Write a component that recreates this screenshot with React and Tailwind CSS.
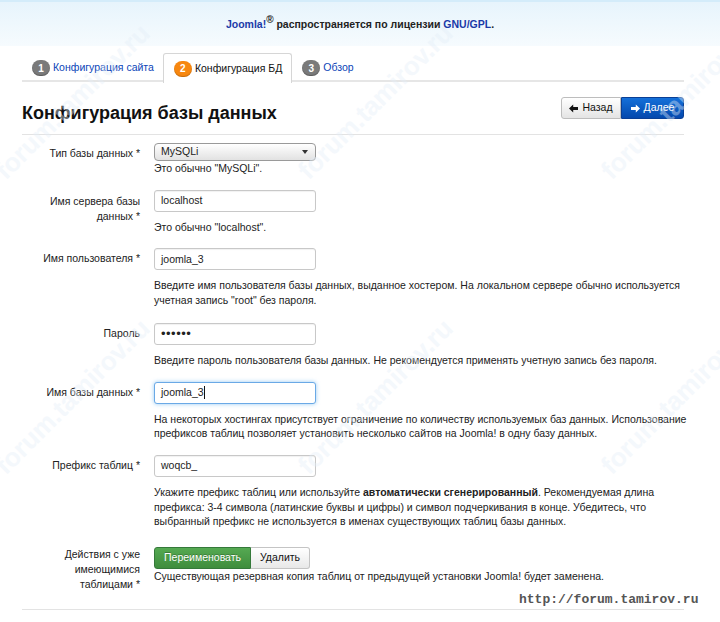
import React from "react";

function ArrowLeft() {
  return (
    <svg width="9" height="9" viewBox="0 0 9 9" className="inline-block">
      <path d="M0 4.5 L4.2 0.5 L4.2 3 L9 3 L9 6 L4.2 6 L4.2 8.5 Z" fill="#111" />
    </svg>
  );
}
function ArrowRight() {
  return (
    <svg width="9" height="9" viewBox="0 0 9 9" className="inline-block">
      <path d="M9 4.5 L4.8 0.5 L4.8 3 L0 3 L0 6 L4.8 6 L4.8 8.5 Z" fill="#fff" />
    </svg>
  );
}

function Row({ label, labelCls, className, children }) {
  return (
    <div className={`flex ${className}`}>
      <div className={`w-[118px] shrink-0 text-right leading-[15px] text-[#222] ${labelCls}`}>{label}</div>
      <div className="ml-[14px] w-[530px]">{children}</div>
    </div>
  );
}

const inputCls =
  "h-[22px] w-[162px] border border-[#c8c8c8] rounded-[3px] bg-white px-[6px] flex items-center text-[10.5px] text-[#222] shadow-[inset_0_1px_1px_rgba(0,0,0,0.06)]";
const helpCls = "text-[10.5px] leading-[14.7px] text-[#222] whitespace-nowrap";

function Watermark({ cls }) {
  return (
    <span
      className={`absolute pointer-events-none origin-bottom-left -rotate-45 whitespace-nowrap text-[26px] leading-[30px] font-bold text-[#e4eef8] opacity-40 font-['Liberation_Sans',sans-serif] ${cls}`}
    >
      forum.tamirov.ru
    </span>
  );
}

export default function App() {
  return (
    <div className="relative w-[720px] h-[622px] overflow-hidden bg-white font-['Liberation_Sans',Arial,sans-serif] text-[10.5px] text-[#222]">
      {/* header band */}
      <div className="h-[46px] border-t-2 border-[#d4ecfa] bg-gradient-to-b from-[#e7f4fc] to-[#f6fbfe] flex items-center justify-center pt-[2px]">
        <span className="font-bold text-[10.5px] text-[#222]">
          <span className="text-[#1a3aa8]">Joomla!</span>
          <sup className="text-[10px] font-bold">®</sup> распространяется по лицензии{" "}
          <span className="text-[#1a3aa8]">GNU/GPL</span>.
        </span>
      </div>

      <div className="px-[22px] w-[706px]">
        {/* tabs */}
        <div className="mt-[8px] h-[28px] flex border-b-2 border-[#e6e6e6]">
          <div className="h-[28px] pl-[10px] pr-[9px] flex items-center gap-[3px]">
            <span className="w-[18px] h-[16px] rounded-full bg-[#7a7a7a] text-white text-[10px] font-bold flex items-center justify-center shadow-[inset_0_-1px_1px_rgba(0,0,0,0.25)]">1</span>
            <span className="text-[#0b45b8]">Конфигурация сайта</span>
          </div>
          <div className="h-[30px] pl-[10px] pr-[9px] flex items-center gap-[3px] border border-[#d6d6d6] border-b-0 rounded-t-[3px] bg-white -mt-[1px]">
            <span className="w-[18px] h-[16px] rounded-full bg-[#f7870f] text-white text-[10px] font-bold flex items-center justify-center shadow-[inset_0_-1px_1px_rgba(0,0,0,0.2)]">2</span>
            <span className="text-[#111]">Конфигурация БД</span>
          </div>
          <div className="h-[28px] pl-[10px] pr-[9px] flex items-center gap-[3px]">
            <span className="w-[18px] h-[16px] rounded-full bg-[#7a7a7a] text-white text-[10px] font-bold flex items-center justify-center shadow-[inset_0_-1px_1px_rgba(0,0,0,0.25)]">3</span>
            <span className="text-[#0b45b8]">Обзор</span>
          </div>
        </div>

        {/* title row */}
        <div className="pt-[15px] flex justify-between items-start">
          <h1 className="mt-[4px] text-[18px] leading-[24px] font-bold text-[#111]">Конфигурация базы данных</h1>
          <div className="flex h-[22px]">
            <div className="w-[60px] h-[22px] flex items-center justify-center gap-[4px] border border-[#bdbdbd] rounded-l-[3px] bg-gradient-to-b from-white to-[#e4e4e4] text-[#111]">
              <ArrowLeft />
              <span>Назад</span>
            </div>
            <div className="w-[63px] h-[22px] flex items-center justify-center gap-[4px] border border-[#0a3f95] rounded-r-[3px] bg-gradient-to-b from-[#1570d9] to-[#0548ad] text-white">
              <ArrowRight />
              <span>Далее</span>
            </div>
          </div>
        </div>
        <div className="mt-[9px] h-px w-[662px] bg-[#e3e3e3]" />

        {/* form */}
        <Row className="mt-[8px]" labelCls="mt-[3px]" label="Тип базы данных *">
          <div className="h-[18px] w-[162px] border border-[#9a9a9a] rounded-[4px] bg-gradient-to-b from-white to-[#e2e2e2] flex items-center justify-between pl-[6px] pr-[7px]">
            <span>MySQLi</span>
            <svg width="6" height="4" viewBox="0 0 6 4"><path d="M0 0 L6 0 L3 4 Z" fill="#333" /></svg>
          </div>
          <div className={helpCls}>Это обычно "MySQLi".</div>
        </Row>

        <Row
          className="mt-[14px]"
          labelCls="mt-[4px]"
          label={<>Имя сервера базы<br />данных *</>}
        >
          <div className={inputCls}>localhost</div>
          <div className={`${helpCls} mt-[8px]`}>Это обычно "localhost".</div>
        </Row>

        <Row className="mt-[14px]" labelCls="mt-[3px]" label="Имя пользователя *">
          <div className={inputCls}>joomla_3</div>
          <div className={`${helpCls} mt-[8px]`}>
            Введите имя пользователя базы данных, выданное хостером. На локальном сервере обычно используется
            <br />
            учетная запись "root" без пароля.
          </div>
        </Row>

        <Row className="mt-[15px]" labelCls="mt-[3px]" label="Пароль">
          <div className={`${inputCls} text-[13px] tracking-[0.5px]`}>••••••</div>
          <div className={`${helpCls} mt-[8px]`}>
            Введите пароль пользователя базы данных. Не рекомендуется применять учетную запись без пароля.
          </div>
        </Row>

        <Row className="mt-[14px]" labelCls="mt-[3px]" label="Имя базы данных *">
          <div className="h-[22px] w-[162px] border border-[#6aa9e6] rounded-[3px] bg-white px-[6px] flex items-center text-[10.5px] text-[#222] shadow-[0_0_4px_rgba(82,168,236,0.6)]">
            joomla_3<span className="inline-block w-px h-[13px] bg-[#111]" />
          </div>
          <div className={`${helpCls} mt-[8px]`}>
            На некоторых хостингах присутствует ограничение по количеству используемых баз данных. Использование
            <br />
            префиксов таблиц позволяет установить несколько сайтов на Joomla! в одну базу данных.
          </div>
        </Row>

        <Row className="mt-[14px]" labelCls="mt-[3px]" label="Префикс таблиц *">
          <div className={inputCls}>woqcb_</div>
          <div className={`${helpCls} mt-[8px]`}>
            Укажите префикс таблиц или используйте <b>автоматически сгенерированный</b>. Рекомендуемая длина
            <br />
            префикса: 3-4 символа (латинские буквы и цифры) и символ подчеркивания в конце. Убедитесь, что
            <br />
            выбранный префикс не используется в именах существующих таблиц базы данных.
          </div>
        </Row>

        <Row
          className="mt-[18px]"
          labelCls="mt-0"
          label={<>Действия с уже<br />имеющимися<br />таблицами *</>}
        >
          <div className="flex h-[22px]">
            <div className="w-[97px] h-[22px] flex items-center justify-center border border-[#35793a] rounded-l-[3px] bg-gradient-to-b from-[#55a952] to-[#3f8d3d] text-white [text-shadow:0_-1px_0_rgba(0,0,0,0.25)]">
              Переименовать
            </div>
            <div className="w-[59px] h-[22px] flex items-center justify-center border border-l-0 border-[#c4c4c4] rounded-r-[3px] bg-gradient-to-b from-white to-[#e8e8e8] text-[#111]">
              Удалить
            </div>
          </div>
          <div className={helpCls}>
            Существующая резервная копия таблиц от предыдущей установки Joomla! будет заменена.
          </div>
        </Row>

        <div className="mt-[17px] h-px w-[662px] bg-[#e3e3e3]" />
      </div>

      {/* watermarks */}
      <Watermark cls="left-[10px] top-[155px]" />
      <Watermark cls="left-[313px] top-[155px]" />
      <Watermark cls="left-[616px] top-[155px]" />
      <Watermark cls="left-[10px] top-[450px]" />
      <Watermark cls="left-[313px] top-[450px]" />
      <Watermark cls="left-[616px] top-[450px]" />

      <span className="absolute left-[519px] top-[591px] font-['Liberation_Mono',monospace] font-bold text-[13px] leading-[18px] text-[#555] [text-shadow:0_0_2px_#fff]">
        http://forum.tamirov.ru
      </span>
    </div>
  );
}
